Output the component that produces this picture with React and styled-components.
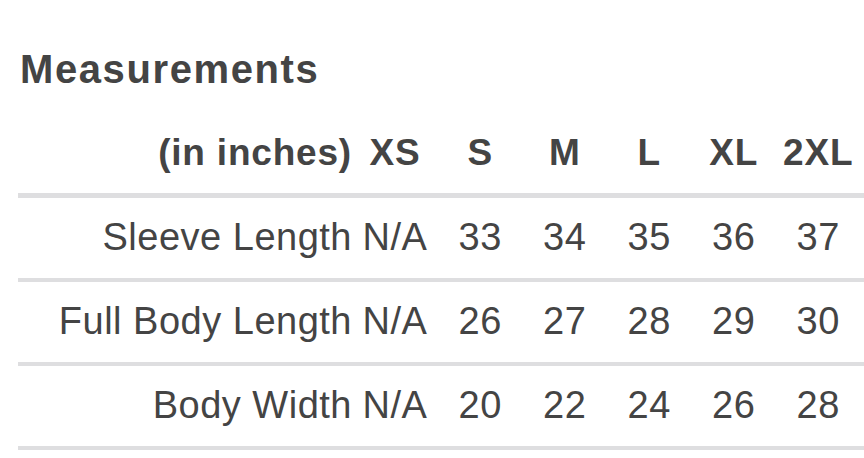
import React from "react";
import styled, { createGlobalStyle } from "styled-components";

const GlobalStyle = createGlobalStyle`
  body {
    margin: 0;
    background: #ffffff;
    font-family: "Liberation Sans", Arial, sans-serif;
    color: #444444;
    overflow: hidden;
  }
`;

const sizes = ["XS", "S", "M", "L", "XL", "2XL"];

const rows = [
  { label: "Sleeve Length", values: ["N/A", 33, 34, 35, 36, 37] },
  { label: "Full Body Length", values: ["N/A", 26, 27, 28, 29, 30] },
  { label: "Body Width", values: ["N/A", 20, 22, 24, 26, 28] },
];

const App = () => {
  return (
    <Page>
      <GlobalStyle />
      <Title>Measurements</Title>
      <Table>
        <Row $head>
          <Label $head>(in inches)</Label>
          {sizes.map((s) => (
            <Cell key={s} $head>
              {s}
            </Cell>
          ))}
        </Row>
        {rows.map((r) => (
          <Row key={r.label}>
            <Label>{r.label}</Label>
            {r.values.map((v, i) => (
              <Cell key={i}>{v}</Cell>
            ))}
          </Row>
        ))}
      </Table>
    </Page>
  );
};

export default App;

const Page = styled.div`
  padding: 46px 0 0 18px;
  width: 846px;
`;

const Title = styled.h2`
  margin: 0 0 40px 2px;
  font-size: 40px;
  line-height: 46px;
  font-weight: 700;
  letter-spacing: 1.6px;
  color: #444444;
`;

const Table = styled.div`
  display: flex;
  flex-direction: column;
`;

const Row = styled.div`
  display: grid;
  grid-template-columns: 334px 86px repeat(5, 84.5px);
  align-items: center;
  padding: ${(p) => (p.$head ? "0 0 20px" : "17px 0 19px")};
  border-bottom: ${(p) => (p.$head ? "5px" : "4px")} solid #dedee0;
`;

const Label = styled.div`
  text-align: right;
  white-space: nowrap;
  font-size: ${(p) => (p.$head ? "37px" : "38px")};
  line-height: ${(p) => (p.$head ? "41px" : "44px")};
  font-weight: ${(p) => (p.$head ? 700 : 400)};
  letter-spacing: ${(p) => (p.$head ? "0.8px" : "0.5px")};
`;

const Cell = styled.div`
  text-align: center;
  white-space: nowrap;
  font-size: ${(p) => (p.$head ? "37px" : "38px")};
  line-height: ${(p) => (p.$head ? "41px" : "44px")};
  font-weight: ${(p) => (p.$head ? 700 : 400)};
  letter-spacing: ${(p) => (p.$head ? "0.8px" : "0.5px")};
`;
